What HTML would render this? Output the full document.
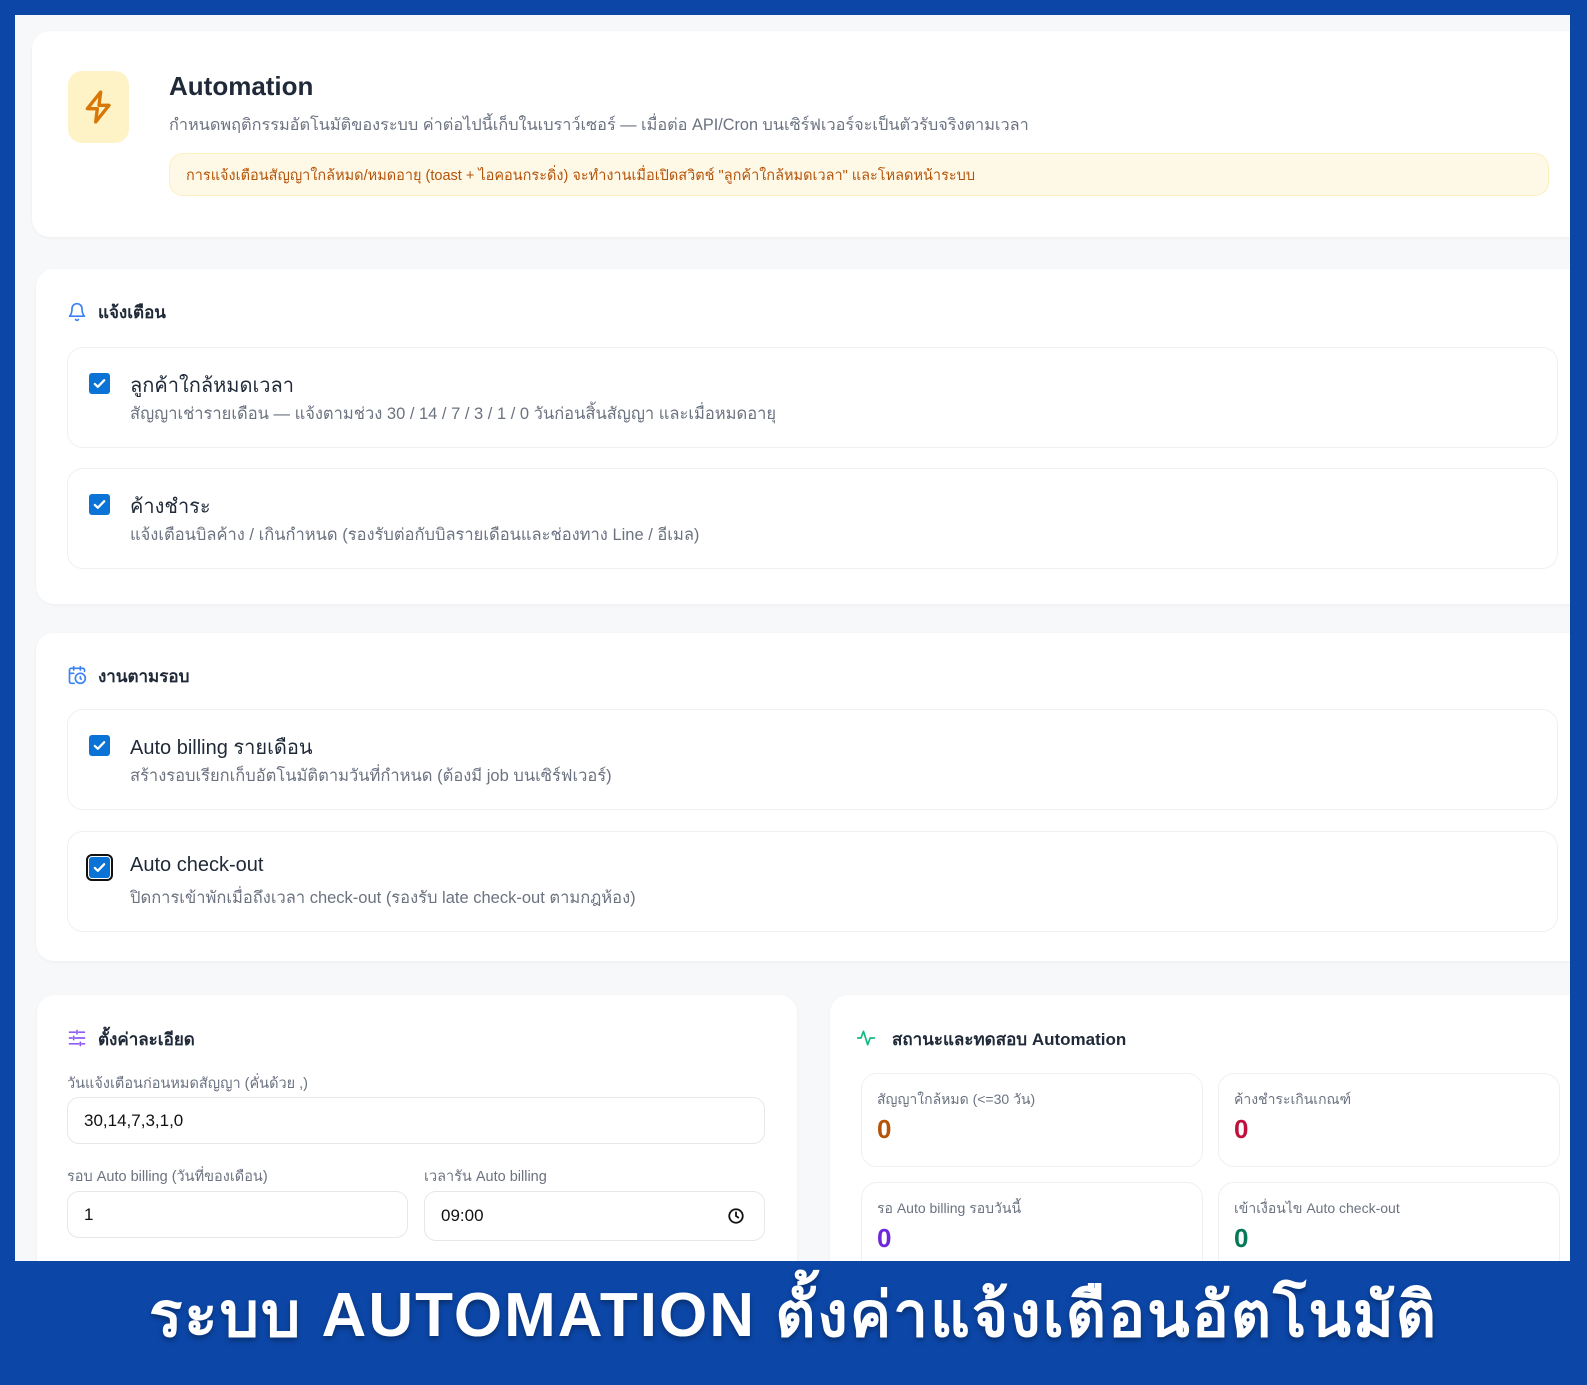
<!DOCTYPE html>
<html><head><meta charset="utf-8"><style>
*{box-sizing:border-box;margin:0;padding:0}
body{width:1587px;height:1385px;background:#0c47a8;position:relative;overflow:hidden;font-family:"Liberation Sans","DejaVu Sans",sans-serif;color:#1f2937}
.page{position:absolute;left:15px;top:15px;width:1555px;height:1246px;background:#f7f8fa;overflow:hidden}
.abs{position:absolute}
.card{position:absolute;background:#fff;border-radius:18px;box-shadow:0 1px 3px rgba(0,0,0,.04)}
.item{position:absolute;left:52px;right:0;border:1px solid #eef0f3;border-radius:16px;background:#fff;height:101px}
.cb{position:absolute;left:21px;top:25px;width:21px;height:21px;border-radius:3px;background:#0b72d6}
.cb svg{position:absolute;left:3px;top:3px}
.it{position:absolute;left:62px;top:21px;font-size:20px;color:#1f2937}
.id{position:absolute;left:62px;top:53px;font-size:16.5px;color:#6b7280}
.sh{position:absolute;left:32px;font-size:17px;font-weight:bold;color:#1f2937}
.lbl{position:absolute;font-size:14.5px;color:#6b7280}
.inp{position:absolute;border:1px solid #e5e7eb;border-radius:12px;background:#fff;font-size:17px;padding-left:16px;display:flex;align-items:center;color:#111}
.stat{position:absolute;border:1px solid #eef0f3;border-radius:16px;background:#fff;width:342px;height:94px}
.stat .l{position:absolute;left:15px;top:15px;font-size:14px;color:#6b7280}
.stat .n{position:absolute;left:15px;top:40px;font-size:26px;font-weight:bold}
</style></head><body>
<div class="page">
  <div class="card" style="left:17px;top:16px;width:1560px;height:206px">
    <div class="abs" style="left:36px;top:40px;width:61px;height:72px;border-radius:14px;background:#fef3c7">
      <svg width="40" height="40" viewBox="0 0 24 24" style="position:absolute;left:11px;top:16px" fill="none" stroke="#d97706" stroke-width="2" stroke-linejoin="round" stroke-linecap="round"><path d="M13 3 5 13h6l-1 8 8-10h-6l1-8z"/></svg>
    </div>
    <div class="abs" style="left:137px;top:40px;font-size:26px;font-weight:bold;color:#1f2937">Automation</div>
    <div class="abs" style="left:137px;top:81px;font-size:16.3px;color:#6b7280">กำหนดพฤติกรรมอัตโนมัติของระบบ ค่าต่อไปนี้เก็บในเบราว์เซอร์ — เมื่อต่อ API/Cron บนเซิร์ฟเวอร์จะเป็นตัวรับจริงตามเวลา</div>
    <div class="abs" style="left:137px;top:122px;width:1380px;height:43px;border-radius:14px;background:#fef9e7;border:1px solid #fdefc0;font-size:14.5px;color:#b45309;padding:10px 0 0 16px">การแจ้งเตือนสัญญาใกล้หมด/หมดอายุ (toast + ไอคอนกระดิ่ง) จะทำงานเมื่อเปิดสวิตช์ "ลูกค้าใกล้หมดเวลา" และโหลดหน้าระบบ</div>
  </div>

  <div class="card" style="left:21px;top:254px;width:1560px;height:335px">
    <svg class="abs" style="left:31px;top:33px" width="20" height="20" viewBox="0 0 24 24" fill="none" stroke="#3b82f6" stroke-width="2" stroke-linecap="round" stroke-linejoin="round"><path d="M6 8a6 6 0 0 1 12 0c0 7 3 9 3 9H3s3-2 3-9"/><path d="M10.3 21a1.94 1.94 0 0 0 3.4 0"/></svg>
    <div class="sh" style="left:62px;top:30px">แจ้งเตือน</div>
    <div class="item" style="left:31px;top:78px;width:1491px">
      <div class="cb"><svg width="15" height="15" viewBox="0 0 16 16"><path d="M3 8.5l3.2 3L13 4.5" fill="none" stroke="#fff" stroke-width="2.4" stroke-linecap="round" stroke-linejoin="round"/></svg></div>
      <div class="it">ลูกค้าใกล้หมดเวลา</div>
      <div class="id">สัญญาเช่ารายเดือน — แจ้งตามช่วง 30 / 14 / 7 / 3 / 1 / 0 วันก่อนสิ้นสัญญา และเมื่อหมดอายุ</div>
    </div>
    <div class="item" style="left:31px;top:199px;width:1491px">
      <div class="cb"><svg width="15" height="15" viewBox="0 0 16 16"><path d="M3 8.5l3.2 3L13 4.5" fill="none" stroke="#fff" stroke-width="2.4" stroke-linecap="round" stroke-linejoin="round"/></svg></div>
      <div class="it">ค้างชำระ</div>
      <div class="id">แจ้งเตือนบิลค้าง / เกินกำหนด (รองรับต่อกับบิลรายเดือนและช่องทาง Line / อีเมล)</div>
    </div>
  </div>

  <div class="card" style="left:21px;top:618px;width:1560px;height:328px">
    <svg class="abs" style="left:31px;top:32px" width="20" height="20" viewBox="0 0 24 24" fill="none" stroke="#3b82f6" stroke-width="2" stroke-linecap="round" stroke-linejoin="round"><path d="M21 7.5V6a2 2 0 0 0-2-2H5a2 2 0 0 0-2 2v14a2 2 0 0 0 2 2h3.5"/><path d="M16 2v4M8 2v4M3 10h5"/><circle cx="16" cy="16" r="6"/><path d="M16 14v2l1 1"/></svg>
    <div class="sh" style="left:62px;top:30px">งานตามรอบ</div>
    <div class="item" style="left:31px;top:76px;width:1491px">
      <div class="cb"><svg width="15" height="15" viewBox="0 0 16 16"><path d="M3 8.5l3.2 3L13 4.5" fill="none" stroke="#fff" stroke-width="2.4" stroke-linecap="round" stroke-linejoin="round"/></svg></div>
      <div class="it">Auto billing รายเดือน</div>
      <div class="id">สร้างรอบเรียกเก็บอัตโนมัติตามวันที่กำหนด (ต้องมี job บนเซิร์ฟเวอร์)</div>
    </div>
    <div class="item" style="left:31px;top:198px;width:1491px">
      <div class="cb" style="outline:2px solid #111;outline-offset:1px"><svg width="15" height="15" viewBox="0 0 16 16"><path d="M3 8.5l3.2 3L13 4.5" fill="none" stroke="#fff" stroke-width="2.4" stroke-linecap="round" stroke-linejoin="round"/></svg></div>
      <div class="it" style="top:22px">Auto check-out</div>
      <div class="id">ปิดการเข้าพักเมื่อถึงเวลา check-out (รองรับ late check-out ตามกฎห้อง)</div>
    </div>
  </div>

  <div class="card" style="left:22px;top:980px;width:760px;height:300px">
    <svg class="abs" style="left:30px;top:33px" width="20" height="20" viewBox="0 0 24 24" fill="none" stroke="#8b5cf6" stroke-width="2" stroke-linecap="round"><path d="M3 5h7M14 5h7M3 12h3M10 12h11M3 19h11M18 19h3M12 3v4M8 10v4M16 17v4"/></svg>
    <div class="sh" style="left:61px;top:31px">ตั้งค่าละเอียด</div>
    <div class="lbl" style="left:30px;top:77px">วันแจ้งเตือนก่อนหมดสัญญา (คั่นด้วย ,)</div>
    <div class="inp" style="left:30px;top:102px;width:698px;height:47px">30,14,7,3,1,0</div>
    <div class="lbl" style="left:30px;top:170px">รอบ Auto billing (วันที่ของเดือน)</div>
    <div class="inp" style="left:30px;top:196px;width:341px;height:47px">1</div>
    <div class="lbl" style="left:387px;top:170px">เวลารัน Auto billing</div>
    <div class="inp" style="left:387px;top:196px;width:341px;height:50px">09:00
      <svg style="position:absolute;right:19px;top:15px" width="18" height="18" viewBox="0 0 24 24" fill="none" stroke="#111" stroke-width="2.4" stroke-linecap="round"><circle cx="12" cy="12" r="9"/><path d="M12 7v5l3 2"/></svg>
    </div>
  </div>

  <div class="card" style="left:815px;top:980px;width:760px;height:300px">
    <svg class="abs" style="left:25px;top:33px" width="22" height="20" viewBox="0 0 24 24" fill="none" stroke="#10b981" stroke-width="2" stroke-linecap="round" stroke-linejoin="round"><path d="M2 12h4l3-8 5 16 3-8h5"/></svg>
    <div class="sh" style="left:62px;top:31px">สถานะและทดสอบ Automation</div>
    <div class="stat" style="left:31px;top:78px"><div class="l">สัญญาใกล้หมด (&lt;=30 วัน)</div><div class="n" style="color:#b45309">0</div></div>
    <div class="stat" style="left:388px;top:78px"><div class="l">ค้างชำระเกินเกณฑ์</div><div class="n" style="color:#be123c">0</div></div>
    <div class="stat" style="left:31px;top:187px"><div class="l">รอ Auto billing รอบวันนี้</div><div class="n" style="color:#6d28d9">0</div></div>
    <div class="stat" style="left:388px;top:187px"><div class="l">เข้าเงื่อนไข Auto check-out</div><div class="n" style="color:#047857">0</div></div>
  </div>
</div>
<div class="abs" style="left:0;top:1266px;width:1587px;text-align:center;font-size:62px;font-weight:bold;color:#fff;text-shadow:0 3px 6px rgba(0,0,0,.35);letter-spacing:2px">ระบบ AUTOMATION ตั้งค่าแจ้งเตือนอัตโนมัติ</div>
</body></html>
